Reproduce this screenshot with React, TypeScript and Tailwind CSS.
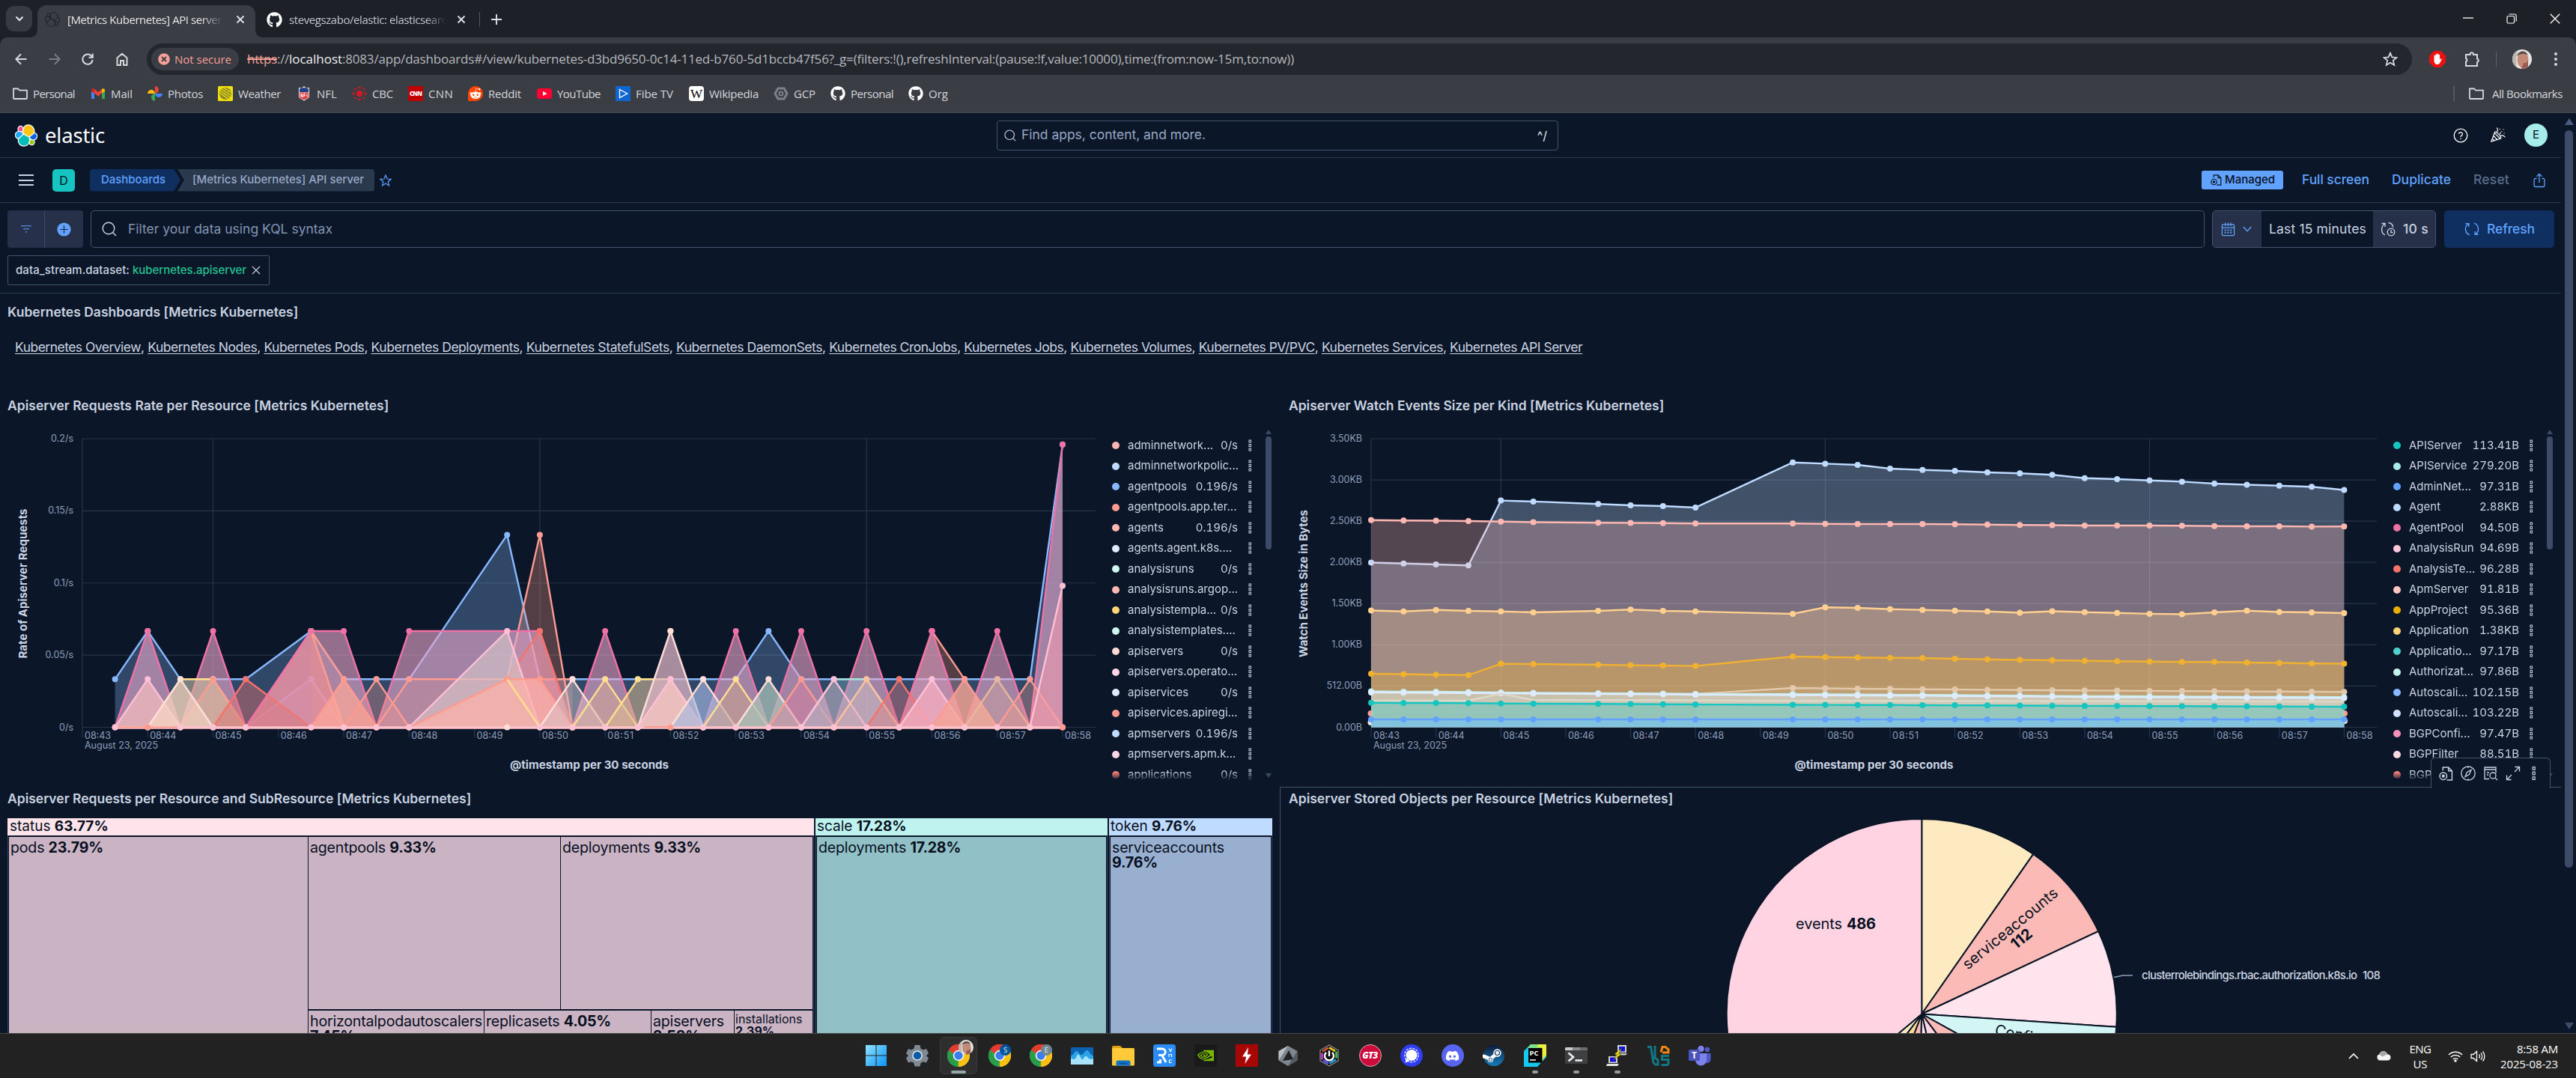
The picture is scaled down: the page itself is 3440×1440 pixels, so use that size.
import { useLayoutEffect, useRef, type ReactNode } from "react";
import { FaGithub, FaDiscord, FaRedditAlien } from "react-icons/fa";
import { SiNvidia, SiSteam } from "react-icons/si";

/* A single line of text whose tracking is tuned so that it spans `w` pixels. */
function Fit({ w, className = "", children }: { w: number; className?: string; children: string }) {
  const ref = useRef<HTMLSpanElement>(null);
  useLayoutEffect(() => {
    const el = ref.current;
    if (!el) return;
    el.style.letterSpacing = "0px";
    const natural = el.getBoundingClientRect().width;
    el.style.letterSpacing = `${(w - natural) / children.length}px`;
  }, [w, children]);
  return (
    <span ref={ref} className={`inline-block shrink-0 whitespace-nowrap ${className}`}>
      {children}
    </span>
  );
}

/* ---------- browser chrome ---------- */

function TabClose({ className = "" }: { className?: string }) {
  return (
    <svg viewBox="0 0 12 12" className={`h-3 w-3 shrink-0 ${className}`} stroke="#dfe1e6" strokeWidth="1.9" fill="none">
      <path d="M1.5 1.5l9 9M10.5 1.5l-9 9" />
    </svg>
  );
}

function ElasticMark({ mono = false, className = "" }: { mono?: boolean; className?: string }) {
  const f = (c: string) => (mono ? "#3b3d44" : c);
  const s = mono ? "#1b1d22" : "#ffffff";
  return (
    <svg viewBox="0 0 32 32" className={`shrink-0 ${className}`}>
      <g stroke={s} strokeWidth={mono ? 1.5 : 1.3}>
        <ellipse cx="8" cy="6.8" rx="3.8" ry="4.2" fill={f("#f04e98")} />
        <ellipse cx="24" cy="25.4" rx="3.8" ry="4.2" fill={f("#93c90e")} />
        <ellipse cx="6" cy="15.4" rx="5.6" ry="5.4" fill={f("#1ba9f5")} />
        <ellipse cx="26" cy="17" rx="5.6" ry="5.4" fill={f("#0b64dd")} />
        <path d="M12.5 13.5C10 9 11.5 1 19 .9c6 0 10 6.500 8 12.100L20 18.500z" fill={f("#fec514")} />
        <path d="M5 20.500l7.500-6.500 8 4.500c2 6-1 12.500-7.500 12.600C7 31 3.500 26 5 20.500z" fill={f("#02bcb7")} />
      </g>
    </svg>
  );
}

function TabStrip() {
  return (
    <div className="flex h-[50px] shrink-0 items-end bg-[#1d2027]">
      <div className="mb-2 ml-2 flex h-[34px] w-[35px] items-center justify-center rounded-[11px] bg-[#383a41]">
        <svg viewBox="0 0 12 8" className="h-[8px] w-[12px]" fill="none" stroke="#e3e5e8" strokeWidth="2">
          <path d="M1.500 1.500L6 6l4.500-4.500" />
        </svg>
      </div>
      <svg viewBox="0 0 10 10" className="ml-[-3px] h-[10px] w-[10px]">
        <path d="M10 0v10H0C6 10 10 6 10 0z" fill="#3b3d44" />
      </svg>
      <div className="flex h-[43px] w-[291px] items-center rounded-t-[12px] bg-[#3b3d44] pb-[5px] pl-[10px]">
        <ElasticMark mono className="h-5 w-5" />
        <div className="ml-[10px] w-[208px] overflow-hidden [mask-image:linear-gradient(90deg,#000_86%,transparent)]">
          <Fit w={206} className="text-[15px] text-[#e6e8ec]">[Metrics Kubernetes] API server</Fit>
        </div>
        <TabClose className="ml-[17px]" />
      </div>
      <svg viewBox="0 0 10 10" className="h-[10px] w-[10px]">
        <path d="M0 0v10h10C4 10 0 6 0 0z" fill="#3b3d44" />
      </svg>
      <div className="flex h-[43px] items-center pb-[5px]">
        <FaGithub className="ml-[5px] h-[21px] w-[21px] text-white" />
        <div className="ml-[9px] w-[209px] overflow-hidden [mask-image:linear-gradient(90deg,#000_88%,transparent)]">
          <Fit w={219} className="text-[15px] text-[#c3c7cd]">stevegszabo/elastic: elasticsearch</Fit>
        </div>
        <TabClose className="ml-[15px]" />
        <div className="ml-[18px] h-5 w-px bg-[#54565d]" />
        <svg viewBox="0 0 14 14" className="ml-[15px] h-[14px] w-[14px]" stroke="#dfe1e6" strokeWidth="1.900">
          <path d="M7 0v14M0 7h14" />
        </svg>
      </div>
      <div className="ml-auto flex h-[50px] items-center gap-[44px] pr-[21px]">
        <svg viewBox="0 0 14 14" className="h-[14px] w-[14px]" stroke="#fff" strokeWidth="1.300" fill="none">
          <path d="M0 6h14" />
        </svg>
        <svg viewBox="0 0 14 14" className="h-[14px] w-[14px]" stroke="#fff" strokeWidth="1.200" fill="none">
          <rect x="1" y="3.500" width="9.500" height="9.500" rx="1.500" />
          <path d="M3.500 1h7.500a2.200 2.200 0 0 1 2.200 2.200v7.300" />
        </svg>
        <svg viewBox="0 0 14 14" className="h-[14px] w-[14px]" stroke="#fff" strokeWidth="1.300" fill="none">
          <path d="M.8.8l12.400 12.400M13.200.8L.8 13.200" />
        </svg>
      </div>
    </div>
  );
}

function AvatarPhoto({ className = "" }: { className?: string }) {
  return (
    <svg viewBox="0 0 26 26" className={className}>
      <clipPath id="face">
        <circle cx="13" cy="13" r="13" />
      </clipPath>
      <g clipPath="url(#face)">
        <rect width="26" height="26" fill="#e4e6e6" />
        <path d="M0 0h9C4 6 5 14 6 26H0z" fill="#b9b6ab" />
        <ellipse cx="14" cy="14" rx="7.500" ry="10.500" fill="#c48a78" />
        <path d="M6 9C8 1 18 0 21 8c-4-3-9-3-15 1z" fill="#5a4a44" />
        <path d="M15 18c3 1 5-1 6-4v12h-9z" fill="#9b5d50" />
      </g>
    </svg>
  );
}

function Toolbar() {
  const st = { fill: "none", stroke: "#d5d8dd", strokeWidth: 2 };
  return (
    <div className="flex h-[50px] shrink-0 items-center bg-[#1d2027]">
      <div className="flex h-[50px] w-full items-center rounded-t-[10px] bg-[#3b3d44] pt-[8px]">
        <svg viewBox="0 0 16 16" className="ml-5 h-4 w-4" {...st}>
          <path d="M15.500 8H1.500M8 1.200L1.300 8 8 14.800" />
        </svg>
        <svg viewBox="0 0 16 16" className="ml-[29px] h-4 w-4 opacity-40" {...st}>
          <path d="M.5 8h14M8 1.200L14.700 8 8 14.800" />
        </svg>
        <svg viewBox="0 0 16 16" className="ml-[28px] h-4 w-4" {...st}>
          <path d="M14 5A6.700 6.700 0 1 0 14.700 9M14.800.5v5.200H9.500" />
        </svg>
        <svg viewBox="0 0 16 18" className="ml-[30px] h-[18px] w-4" {...st}>
          <path d="M1.500 7.200L8 1.800l6.500 5.400V17H10v-6H6v6H1.500z" />
        </svg>
        <div className="ml-[25px] flex h-[42px] w-[3025px] items-center rounded-full bg-[#24262d] pl-[6px]">
          <div className="flex h-[30px] w-[117px] items-center rounded-full bg-[#3b3d44] pl-[9px]">
            <svg viewBox="0 0 16 16" className="h-4 w-4">
              <circle cx="8" cy="8" r="7.800" fill="#f6a099" />
              <path d="M5 5l6 6M11 5l-6 6" stroke="#3b3d44" strokeWidth="1.800" />
            </svg>
            <Fit w={76} className="ml-[6px] text-[15px] font-medium text-[#f6a099]">Not secure</Fit>
          </div>
          <div className="ml-[11px] flex text-[17px]">
            <Fit w={40} className="text-[#f6a099] line-through decoration-2">https</Fit>
            <Fit w={16} className="text-[#b4b8bf]">://</Fit>
            <Fit w={71} className="text-[#eef0f2]">localhost</Fit>
            <Fit w={1271} className="text-[#b4b8bf]">
              :8083/app/dashboards#/view/kubernetes-d3bd9650-0c14-11ed-b760-5d1bccb47f56?_g=(filters:!(),refreshInterval:(pause:!f,value:10000),time:(from:now-15m,to:now))
            </Fit>
          </div>
          <svg viewBox="0 0 20 20" className="mr-[19px] ml-auto h-[20px] w-[20px]" fill="none" stroke="#d5d8dd" strokeWidth="1.800">
            <path d="M10 1.800l2.400 5.600 6 .5-4.600 4 1.400 6L10 14.700l-5.200 3.200 1.400-6-4.600-4 6-.5z" />
          </svg>
        </div>
        <svg viewBox="0 0 22 22" className="ml-[23px] h-[22px] w-[22px]">
          <path d="M6.500 0h9L22 6.500v9L15.500 22h-9L0 15.500v-9z" fill="#ee1111" />
          <path d="M6.500 12V6.500a1 1 0 0 1 1.900 0V5a1 1 0 0 1 1.900 0v-.7a1 1 0 0 1 1.900 0V5.500a1 1 0 0 1 1.900 0V12l1-1.500c.6-.8 1.700-.2 1.400.7C15 15 14 18 10.800 18c-3.300 0-4.300-2.500-4.300-6z" fill="#fff" />
        </svg>
        <svg viewBox="0 0 22 22" className="ml-[24px] h-[22px] w-[22px]" fill="none" stroke="#d5d8dd" strokeWidth="2">
          <path d="M3 5h5.500a2.300 2.300 0 1 1 4.500 0H18v5.500a2.300 2.300 0 0 1 0 4.500v5H3v-5.500a2.500 2.500 0 0 0 0-4.500z" />
        </svg>
        <div className="ml-[21px] h-5 w-px bg-[#5a6070]" />
        <AvatarPhoto className="ml-[21px] h-[26px] w-[26px]" />
        <svg viewBox="0 0 4 18" className="ml-[30px] h-[18px] w-1" fill="#d5d8dd">
          <circle cx="2" cy="2" r="2" />
          <circle cx="2" cy="9" r="2" />
          <circle cx="2" cy="16" r="2" />
        </svg>
      </div>
    </div>
  );
}

function FolderIcon() {
  return (
    <svg viewBox="0 0 20 20" className="h-5 w-5 shrink-0" fill="none" stroke="#d5d8dd" strokeWidth="1.800">
      <path d="M1 16V3.500h6l2 2.200h10V16a1 1 0 0 1-1 1H2a1 1 0 0 1-1-1z" />
    </svg>
  );
}

const bmIcon: Record<string, ReactNode> = {
  mail: (
    <svg viewBox="0 0 20 20" className="h-5 w-5">
      <path d="M1 5v12h4V9z" fill="#4285f4" />
      <path d="M19 5v12h-4V9z" fill="#34a853" />
      <path d="M1 5.500C1 3 3.500 2.500 5 4l5 4 5-4v5.500l-5 4-5-4z" fill="#ea4335" />
      <path d="M1 5.500C1 3 3.500 2.500 5 4v5.500L1 7z" fill="#c5221f" />
      <path d="M19 5.500C19 3 16.500 2.500 15 4v5.500L19 7z" fill="#fbbc04" />
    </svg>
  ),
  photos: (
    <svg viewBox="0 0 20 20" className="h-5 w-5">
      <path d="M10 0a5 5 0 0 1 0 10z" fill="#ea4335" />
      <path d="M20 10a5 5 0 0 1-10 0z" fill="#4285f4" />
      <path d="M10 20a5 5 0 0 1 0-10z" fill="#34a853" />
      <path d="M0 10a5 5 0 0 1 10 0z" fill="#fbbc04" />
    </svg>
  ),
  weather: (
    <svg viewBox="0 0 20 20" className="h-5 w-5">
      <rect width="20" height="20" rx="1.500" fill="#f3df0c" />
      <circle cx="10" cy="10" r="8" fill="#8a8a2c" />
      <path d="M3 6l13 9M2.500 9l11 8M5 4l12 8M8 2.500l9.500 6" stroke="#f3df0c" strokeWidth="1.100" />
    </svg>
  ),
  nfl: (
    <svg viewBox="0 0 20 20" className="h-5 w-5">
      <path d="M3 2l4 .8L10 0l3 2.800L17 2v12c0 3-5 3-7 6-2-3-7-3-7-6z" fill="#e9edf5" />
      <path d="M4 3.500l6-1.500 6 1.500V8H4z" fill="#1f3f86" />
      <path d="M4 8.500h12v6c0 2-4 2-6 4-2-2-6-2-6-4z" fill="#d33" />
      <path d="M6 10v5M6 10l2 5V10M10 15v-5h2M10 12.500h2M14 10v5" stroke="#fff" strokeWidth="1" fill="none" />
    </svg>
  ),
  cbc: (
    <svg viewBox="0 0 20 20" className="h-5 w-5" fill="#d21a26">
      <circle cx="10" cy="10" r="4.200" />
      <path d="M5.800 4.500a6 6 0 0 1 8.400 0L10 0zM5.800 15.500a6 6 0 0 0 8.400 0L10 20zM4.500 5.800a6 6 0 0 0 0 8.400L0 10zM15.500 5.800a6 6 0 0 1 0 8.400L20 10z" />
      <path d="M3 3h3L3 6zM17 3h-3l3 3zM3 17h3l-3-3zM17 17h-3l3-3z" />
    </svg>
  ),
  cnn: (
    <span className="flex h-5 w-5 items-center justify-center bg-[#c00000] text-[8px] font-black tracking-[-0.8px] text-white">CNN</span>
  ),
  reddit: (
    <span className="flex h-5 w-5 items-center justify-center rounded-full rounded-bl-sm bg-[#ff4500]">
      <FaRedditAlien className="h-4 w-4 text-white" />
    </span>
  ),
  youtube: (
    <svg viewBox="0 0 20 20" className="h-5 w-5">
      <rect x="0" y="3" width="20" height="14" rx="3.500" fill="#ff0033" />
      <path d="M8 7l5.500 3L8 13z" fill="#fff" />
    </svg>
  ),
  fibe: (
    <svg viewBox="0 0 20 20" className="h-5 w-5">
      <rect width="20" height="20" fill="#0f66d0" />
      <path d="M5.500 4.500L15.500 10l-10 5.500z" fill="none" stroke="#fff" strokeWidth="1.400" />
    </svg>
  ),
  wiki: (
    <span className="flex h-5 w-5 items-center justify-center rounded-[4px] bg-white font-['Liberation_Serif',serif] text-[17px] leading-none text-black">W</span>
  ),
  gcp: (
    <svg viewBox="0 0 20 20" className="h-5 w-5" fill="none" stroke="#7d8086" strokeWidth="3">
      <path d="M6 3h8l4 7-4 7H6l-4-7z" />
      <circle cx="10" cy="10" r="2.500" strokeWidth="2" />
    </svg>
  ),
  github: <FaGithub className="h-5 w-5 text-white" />,
  folder: <FolderIcon />,
};

const bookmarks: [string, string, number, number][] = [
  ["folder", "Personal", 56, 21],
  ["mail", "Mail", 29, 20],
  ["photos", "Photos", 47, 20],
  ["weather", "Weather", 57, 21],
  ["nfl", "NFL", 27, 20],
  ["cbc", "CBC", 28, 20],
  ["cnn", "CNN", 33, 20],
  ["reddit", "Reddit", 44, 21],
  ["youtube", "YouTube", 58, 20],
  ["fibe", "Fibe TV", 50, 21],
  ["wiki", "Wikipedia", 66, 20],
  ["gcp", "GCP", 29, 20],
  ["github", "Personal", 57, 20],
  ["github", "Org", 26, 0],
];

function BookmarkBar() {
  return (
    <div className="flex h-[51px] shrink-0 items-center border-b border-[#4a4c50] bg-[#3b3d44] pl-[17px] text-[15px] text-[#d3d6db]">
      {bookmarks.map(([icon, label, w, gap], i) => (
        <div key={i} className="flex items-center" style={{ marginRight: gap }}>
          {bmIcon[icon]}
          <Fit w={w} className="ml-[7px]">{label}</Fit>
        </div>
      ))}
      <div className="ml-auto h-5 w-[2px] bg-[#565861]" />
      <div className="mr-[18px] ml-[19px] flex items-center">
        <FolderIcon />
        <Fit w={94} className="ml-[11px]">All Bookmarks</Fit>
      </div>
    </div>
  );
}

/* ---------- Kibana header ---------- */

function SearchGlass({ className = "" }: { className?: string }) {
  return (
    <svg viewBox="0 0 20 20" className={`shrink-0 ${className}`} fill="none" stroke="#cad3e2" strokeWidth="1.400">
      <circle cx="9" cy="9" r="7.800" />
      <path d="M14.500 14.500l4.500 4.500" />
    </svg>
  );
}

function KibanaHeader() {
  return (
    <div className="flex h-[60px] shrink-0 items-center border-b border-[#2b394f]">
      <ElasticMark className="ml-5 h-[30px] w-[30px]" />
      <Fit w={80} className="mt-px ml-[10px] font-['Noto_Sans',sans-serif] text-[27.500px] leading-none text-white">elastic</Fit>
      <div className="ml-[1191px] flex h-10 w-[750px] items-center rounded-[4px] border border-[#43536f] pl-[9px]">
        <SearchGlass className="h-4 w-4" />
        <Fit w={246} className="ml-[7px] text-[17.5px] text-[#98a8c3]">Find apps, content, and more.</Fit>
        <span className="mr-[14px] ml-auto text-[16px] text-[#e3e8f2]">^/</span>
      </div>
      <svg viewBox="0 0 20 20" className="ml-[1195px] h-[20px] w-[20px]" fill="none" stroke="#fff" strokeWidth="1.300">
        <circle cx="10" cy="10" r="8.800" />
        <path d="M7.600 8a2.400 2.400 0 1 1 3.600 2.100c-.8.500-1.200.9-1.200 1.900M10 13.600v1.500" />
      </svg>
      <svg viewBox="0 0 22 22" className="ml-[29px] h-[21px] w-[21px]" fill="none" stroke="#fff" strokeWidth="1.300">
        <path d="M7 6.500L2 20l13.500-4.500C16 13 9.500 6 7 6.500zM6.500 8l8 8M5 12l5.500 5.500M3.500 16l3 3M10 6c2-1 1-3 0-5M14 9l1-1.500M15 12c2.500-1.500 4.500 0 6 1.500M16.500 6h.1M14 2.500h.1M19 3h.1M20 8.500h.1" strokeLinecap="round" />
      </svg>
      <div className="ml-[25px] flex h-[31px] w-[31px] items-center justify-center rounded-full bg-[#a6edea] text-[15px] text-[#07101f]">E</div>
    </div>
  );
}

function Breadcrumbs() {
  return (
    <div className="flex h-[60px] shrink-0 items-center border-b border-[#2b394f] text-[15px]">
      <div className="ml-[25px] flex flex-col gap-[4.500px]">
        <div className="h-[2px] w-5 bg-[#cad3e2]" />
        <div className="h-[2px] w-5 bg-[#cad3e2]" />
        <div className="h-[2px] w-5 bg-[#cad3e2]" />
      </div>
      <div className="ml-[25px] flex h-[30px] w-[30px] items-center justify-center rounded-[5px] bg-[#16c5c0] text-[16px] text-[#07101f]">D</div>
      <div className="ml-5 flex h-[30px] w-[121px] items-center rounded-l-[4px] bg-[#0f2f60] pl-[15px] [clip-path:polygon(0_0,112px_0,100%_50%,112px_100%,0_100%)]">
        <Fit w={86} className="font-medium text-[#61a2ff]">Dashboards</Fit>
      </div>
      <div className="ml-[-4px] flex h-[30px] w-[263px] items-center rounded-r-[4px] bg-[#2b394f] pl-[20px] [clip-path:polygon(0_0,100%_0,100%_100%,0_100%,9px_50%)]">
        <Fit w={229} className="font-medium text-[#98a8c3]">[Metrics Kubernetes] API server</Fit>
      </div>
      <svg viewBox="0 0 16 16" className="ml-[7px] h-4 w-4" fill="none" stroke="#61a2ff" strokeWidth="1.200">
        <path d="M8 1l2 5 5.200.3-4 3.400 1.300 5.200L8 12l-4.500 2.900 1.300-5.200-4-3.400L6 6z" />
      </svg>
      <div className="ml-auto flex h-[25px] w-[109px] items-center rounded-[3px] bg-[#61a2ff] pl-[12px]">
        <DocClockIcon className="h-[15px] w-[15px] text-[#07101f]" />
        <Fit w={67} className="ml-[4px] font-medium text-[#07101f]">Managed</Fit>
      </div>
      <Fit w={90} className="ml-[25px] text-[17.500px] font-medium text-[#61a2ff]">Full screen</Fit>
      <Fit w={79} className="ml-[30px] text-[17.500px] font-medium text-[#61a2ff]">Duplicate</Fit>
      <Fit w={48} className="ml-[30px] text-[17.500px] font-medium text-[#5a6d8c]">Reset</Fit>
      <svg viewBox="0 0 20 20" className="mr-[19px] ml-[30px] h-5 w-5" fill="none" stroke="#61a2ff" strokeWidth="1.300">
        <path d="M6.500 7.500H4.500c-.8 0-1.400.6-1.400 1.400v8.200c0 .8.600 1.400 1.400 1.400h11c.8 0 1.400-.6 1.400-1.400V8.900c0-.8-.6-1.400-1.400-1.400h-2M10 13V1.500M6.500 4.800L10 1.300l3.500 3.500" />
      </svg>
    </div>
  );
}

function DocClockIcon({ className = "" }: { className?: string }) {
  return (
    <svg viewBox="0 0 18 18" className={`shrink-0 ${className}`} fill="none" stroke="currentColor" strokeWidth="1.400">
      <path d="M5 5V1h7l4.500 4.500V17H10M12 1v4.500h4.500" />
      <circle cx="5.500" cy="12" r="4.500" />
      <circle cx="5.500" cy="12" r="1.300" fill="currentColor" />
    </svg>
  );
}

function QueryBar() {
  return (
    <div className="flex h-[121px] shrink-0 flex-col border-b border-[#2b394f] pt-[10px] pl-[10px]">
      <div className="flex h-[50px] items-center">
        <div className="flex h-[50px] w-[101px] overflow-hidden rounded-[4px] bg-[#263149]">
          <div className="flex w-[50px] items-center justify-center border-r border-[#3a4c6b]">
            <svg viewBox="0 0 14 10" className="h-[10px] w-[14px]" fill="#4a7cc8">
              <path d="M0 0h14v1.500H0zM3 4h8v1.500H3zM5.800 8h2.400v1.600H5.800z" />
            </svg>
          </div>
          <div className="flex flex-1 items-center justify-center">
            <svg viewBox="0 0 20 20" className="h-[19px] w-[19px]">
              <circle cx="10" cy="10" r="9.600" fill="#61a2ff" />
              <path d="M10 4.500v11M4.500 10h11" stroke="#1d2a44" strokeWidth="1.300" />
            </svg>
          </div>
        </div>
        <div className="ml-[10px] flex h-[50px] w-[2823px] items-center rounded-[5px] border border-[#43536f] pl-[14px]">
          <SearchGlass className="h-[20px] w-[20px]" />
          <Fit w={273} className="ml-[15px] text-[17.500px] text-[#8395b3]">Filter your data using KQL syntax</Fit>
        </div>
        <div className="ml-[10px] flex h-[50px] w-[299px] overflow-hidden rounded-[5px] border border-[#43536f]">
          <div className="flex w-[65px] items-center bg-[#263149] pl-[11px]">
            <svg viewBox="0 0 20 20" className="h-[19px] w-[19px]" fill="none" stroke="#61a2ff" strokeWidth="1.300">
              <rect x="1.500" y="3" width="17" height="15.500" rx="1.500" />
              <path d="M1.500 7.500h17M6 .5V5M14 .5V5M10 .5V5" />
              <path d="M5 11h2M9 11h2M13 11h2M5 14.500h2M9 14.500h2M13 14.500h2" strokeWidth="2" />
            </svg>
            <svg viewBox="0 0 12 8" className="ml-[10px] h-[8px] w-[12px]" fill="none" stroke="#61a2ff" strokeWidth="1.300">
              <path d="M.8 1L6 6.800 11.200 1" />
            </svg>
          </div>
          <div className="flex w-[149px] items-center pl-[10px]">
            <Fit w={130} className="text-[17.500px] text-[#cad3e2]">Last 15 minutes</Fit>
          </div>
          <div className="flex flex-1 items-center bg-[#263149] pl-[10px]">
            <svg viewBox="0 0 20 20" className="h-5 w-5" fill="none" stroke="#cad3e2" strokeWidth="1.300">
              <path d="M1.500 2.500h4.500v4.500M6 18C.5 15.500 0 7 5.500 3M10.500 1.500c4 .5 6 3.500 6.200 6.200" />
              <circle cx="14" cy="14" r="4.800" />
              <path d="M14 11v3.500h2.500" />
            </svg>
            <Fit w={34} className="ml-[10px] text-[17.500px] font-medium text-[#cad3e2]">10 s</Fit>
          </div>
        </div>
        <div className="ml-[11px] flex h-[50px] w-[147px] items-center rounded-[5px] bg-[#0f2f60] pl-[27px]">
          <svg viewBox="0 0 20 20" className="h-[20px] w-[20px]" fill="none" stroke="#61a2ff" strokeWidth="1.400">
            <path d="M7 17.800A8.200 8.200 0 0 1 5.500 3M1.500 2.700h4.300V7M13 2.200A8.200 8.200 0 0 1 14.500 17M18.500 17.300h-4.300V13" />
          </svg>
          <Fit w={64} className="ml-[10px] text-[17.500px] font-medium text-[#61a2ff]">Refresh</Fit>
        </div>
      </div>
      <div className="mt-[10px] flex h-10 w-[350px] items-center rounded-[2px] border border-[#43536f] pl-[10px] text-[15px] font-medium">
        <Fit w={152} className="text-[#cad3e2]">data_stream.dataset:</Fit>
        <Fit w={152} className="ml-[4px] text-[#24c292]">kubernetes.apiserver</Fit>
        <svg viewBox="0 0 12 12" className="ml-[7px] h-3 w-3" stroke="#cad3e2" strokeWidth="1.100">
          <path d="M1 1l10 10M11 1L1 11" />
        </svg>
      </div>
    </div>
  );
}

/* ---------- panels ---------- */

const links: [string, number][] = [
  ["Kubernetes Overview", 168],
  ["Kubernetes Nodes", 146],
  ["Kubernetes Pods", 134],
  ["Kubernetes Deployments", 198],
  ["Kubernetes StatefulSets", 191],
  ["Kubernetes DaemonSets", 195],
  ["Kubernetes CronJobs", 171],
  ["Kubernetes Jobs", 133],
  ["Kubernetes Volumes", 162],
  ["Kubernetes PV/PVC", 155],
  ["Kubernetes Services", 162],
  ["Kubernetes API Server", 177],
];

function PanelTitle({ w, children }: { w: number; children: string }) {
  return <Fit w={w} className="text-[17.500px] font-semibold text-[#cad3e2]">{children}</Fit>;
}

type Series = {
  pts: [number, number][];
  line: string;
  fill?: string;
  alpha?: number;
  dots?: boolean;
};

function AreaSeries({ s, x, y, base, r = 4 }: { s: Series; x: (i: number) => number; y: (v: number) => number; base: number; r?: number }) {
  const d = s.pts.map(([i, v], k) => `${k ? "L" : "M"}${x(i).toFixed(1)} ${y(v).toFixed(1)}`).join("");
  const first = x(s.pts[0][0]);
  const last = x(s.pts[s.pts.length - 1][0]);
  return (
    <g>
      {s.alpha !== 0 && <path d={`${d}L${last} ${base}L${first} ${base}z`} fill={s.fill ?? s.line} fillOpacity={s.alpha ?? 0.3} />}
      <path d={d} fill="none" stroke={s.line} strokeWidth="2.400" />
      {s.dots !== false && s.pts.map(([i, v]) => <circle key={i} cx={x(i)} cy={y(v)} r={r} fill={s.line} />)}
    </g>
  );
}

const TICKS = Array.from({ length: 16 }, (_, k) => `08:${43 + k}`);

function ChartFrame({
  x0, x1, step, labels, rows, labelRight, title, titleX, titleW, dateX, xTitleX, children,
}: {
  x0: number; x1: number; step: number; labels: string[]; rows: number; labelRight: number;
  title: string; titleX: number; titleW: number; dateX: number; xTitleX: number; children: ReactNode;
}) {
  const top = 586;
  const bottom = 971.5;
  return (
    <>
      <g stroke="#2b394f" strokeWidth="1.200" strokeOpacity="0.850">
        {labels.map((_, k) => {
          const yy = top + ((bottom - top) * k) / rows;
          return <path key={k} d={`M${x0} ${yy}H${x1}`} />;
        })}
        {[0, 2, 7, 12].map((m) => (
          <path key={m} d={`M${x0 + m * step} ${top}V${bottom}`} />
        ))}
        {TICKS.map((_, k) => (
          <path key={k} d={`M${x0 + k * step} ${bottom}v14`} />
        ))}
      </g>
      {children}
      <g fill="#8e9fbc" fontSize="12.500">
        {labels.map((l, k) => (
          <text key={l} x={labelRight} y={top + ((bottom - top) * k) / rows + 4} textAnchor="end">{l}</text>
        ))}
        {TICKS.map((t, k) => (
          <text key={t} x={x0 + k * step + 3} y={986.500} textLength="35" lengthAdjust="spacing">{t}</text>
        ))}
        <text x={dateX} y={1000} textLength="98">August 23, 2025</text>
      </g>
      <g fill="#cad3e2" fontSize="15" fontWeight="700">
        <text x={xTitleX} y="1026.500" textAnchor="middle" textLength="212">@timestamp per 30 seconds</text>
        <text transform={`translate(${titleX} 779.500) rotate(-90)`} textAnchor="middle" textLength={titleW}>{title}</text>
      </g>
    </>
  );
}

const P = (s: string): [number, number][] =>
  s.split(" ").map((p) => {
    const [i, v] = p.split(":");
    return [Number(i), Number(v)];
  });

const BLUE = "#88b8ff";
const SALMON = "#ff9a90";
const PINK = "#ee72a6";
const LPINK = "#ffbfd4";
const CREAM = "#ffded8";
const YELLOW = "#ffde8e";
const RED = "#f6726a";

const rateSeries: Series[] = [
  { line: BLUE, pts: P("1:1 2:2 3:1 4:1 5:1 7:2 8:1 9:1 10:1 13:4 14:1 15:1 16:1 17:1 18:1 19:1 20:1 21:2 22:1 23:1 24:1 25:1 26:1 27:1 28:1 29:1 30:5.880"), dots: true },
  { line: SALMON, pts: P("13:1 14:4 15:0") },
  { line: SALMON, pts: P("25:0 26:2 27:1 28:0") },
  { line: PINK, fill: "#e9a7cc", alpha: 0.62, pts: P("1:0 2:2 3:0 4:2 5:0 7:2 8:2 9:0 10:2 13:2 14:2 15:0 16:2 17:0") },
  { line: PINK, fill: "#e9a7cc", alpha: 0.62, pts: P("19:0 20:2 21:0 22:2 23:0 24:2 25:0 26:2 27:0 28:2 29:0 30:5.880") },
  { line: "#b9a0e0", pts: P("5:0 7:1 8:0") },
  { line: SALMON, fill: "#ff8f8f", alpha: 0.55, pts: P("5:0 7:2 8:0") },
  { line: SALMON, alpha: 0.1, pts: P("7:2 8:1 9:0") },
  { line: YELLOW, fill: "#d8c890", alpha: 0.45, pts: P("2:0 3:1 4:1 5:0") },
  { line: SALMON, fill: "#e9b4a0", alpha: 0.4, pts: P("3:0 4:1 5:0") },
  { line: RED, fill: "#e07070", alpha: 0.45, pts: P("4:0 5:1 7:0") },
  { line: SALMON, fill: "#ffaa9a", alpha: 0.7, pts: P("7:0 8:1 9:0") },
  { line: SALMON, alpha: 0.3, pts: P("8:0 9:1 10:0") },
  { line: PINK, dots: false, fill: "#c08ab4", alpha: 0.15, pts: P("5:0 7:2") },
  { line: SALMON, alpha: 0.2, pts: P("9:0 10:1 13:1 14:1 15:1") },
  { line: RED, fill: "#f48a8f", alpha: 0.3, pts: P("13:1 14:2 15:0") },
  { line: LPINK, fill: "#d6c4c8", alpha: 0.65, pts: P("10:0 13:2 14:0") },
  { line: SALMON, fill: "#ffb0aa", alpha: 0.7, pts: P("10:0 13:1 14:1 15:0") },
  { line: YELLOW, fill: "#e8b0a0", alpha: 0.2, pts: P("13:1 14:0"), dots: false },
  { line: LPINK, fill: "#ffc4c0", alpha: 0.65, pts: P("1:0 2:1 3:0") },
  { line: CREAM, fill: "#f4d4c4", alpha: 0.65, pts: P("2:0 3:1 4:0") },
  { line: CREAM, fill: "#d8c8cc", alpha: 0.45, pts: P("14:0 15:1 16:0") },
  { line: YELLOW, fill: "#ddb09a", alpha: 0.5, pts: P("15:0 16:1 17:0") },
  { line: YELLOW, fill: "#d8b890", alpha: 0.55, pts: P("16:0 17:1 18:1 19:0") },
  { line: CREAM, fill: "#dcb4c4", alpha: 0.75, pts: P("17:0 18:2 19:0") },
  { line: LPINK, fill: "#f8c8c0", alpha: 0.7, pts: P("17:0 18:1 19:0") },
  { line: CREAM, fill: "#a4b8e0", alpha: 0.65, pts: P("18:0 19:1 20:0") },
  { line: YELLOW, fill: "#c8a090", alpha: 0.6, pts: P("19:0 20:1 21:0") },
  { line: CREAM, fill: "#a8c0b8", alpha: 0.75, pts: P("20:0 21:1 22:0") },
  { line: SALMON, fill: "#e080a0", alpha: 0.45, pts: P("21:0 22:1 23:0") },
  { line: "#a8e0dc", fill: "#8fc8d0", alpha: 0.3, dots: false, pts: P("22:0 23:1 24:1 25:0") },
  { line: LPINK, fill: "#c0a8bc", alpha: 0.5, pts: P("22:0 23:1 24:0") },
  { line: "#ffc29a", fill: "#d8b0b8", alpha: 0.5, pts: P("23:0 24:1 25:0") },
  { line: RED, fill: "#e07880", alpha: 0.4, pts: P("24:0 25:1 26:0") },
  { line: LPINK, fill: "#ffb4c4", alpha: 0.65, pts: P("25:0 26:1 27:0") },
  { line: SALMON, fill: "#f4a494", alpha: 0.75, pts: P("26:0 27:1 28:0") },
  { line: "#e8b89a", alpha: 0.3, pts: P("27:0 28:1 29:0") },
  { line: SALMON, alpha: 0.3, pts: P("28:0 29:1 30:0") },
  { line: LPINK, fill: "#f49cb0", alpha: 0.6, pts: P("29:0 30:2.940") },
];

function RateChart() {
  const x = (i: number) => 110 + 43.633 * i;
  const y = (v: number) => 971.5 - v * 64.25;
  const idx = [1, 2, 3, 4, 5, 7, 8, 9, 10, 13, 14, 15, 16, 17, 18, 19, 20, 21, 22, 23, 24, 25, 26, 27, 28, 29, 30];
  return (
    <svg viewBox="0 567 1480 484" className="h-[484px] w-[1480px] shrink-0">
      <ChartFrame x0={110} x1={1463} step={87.267} rows={4} labels={["0.2/s", "0.15/s", "0.1/s", "0.05/s", "0/s"]} labelRight={98}
        title="Rate of Apiserver Requests" titleX={35.5} titleW={200} dateX={113} xTitleX={787}>
        {rateSeries.map((s, k) => (
          <AreaSeries key={k} s={s} x={x} y={y} base={971.5} />
        ))}
        {[[2, 2], [7, 2], [14, 2], [18, 2], [26, 2]].map(([i, v]) => (
          <circle key={i} cx={x(i)} cy={y(v)} r="4" fill={i === 14 ? RED : i === 18 ? CREAM : PINK} />
        ))}
        <path d={`M${x(1)} 972H${x(30)}`} stroke="#ffc2ca" strokeWidth="3.500" />
        <path d={`M${x(1)} 971.500H${x(2.900)}M${x(17.200)} 971H${x(18)}`} stroke={SALMON} strokeWidth="2" />
        {idx.map((i) => (
          <circle key={i} cx={x(i)} cy="971.500" r="4" fill={i === 2 || i === 18 || i === 30 ? SALMON : i === 13 ? CREAM : "#ffc2d4"} />
        ))}
      </ChartFrame>
    </svg>
  );
}

const sizeSeries: Series[] = [
  { line: "#bfdbff", pts: P("0:751.5 1:752.8 2:754 3:755.3 4:668.6 5:669.9 7:673.2 8:675 9:676 10:678 13:617.7 14:619.4 15:621 16:626 17:627.8 18:629 19:631 20:632.300 21:634.300 22:638.7 23:640 24:641.7 25:643.4 26:646 27:647.5 28:648.8 29:650.200 30:654.5") },
  { line: "#ffb7b2", pts: P("0:694.7 1:695.2 2:695.5 3:696 4:696.8 5:697.5 7:698.2 8:698.5 9:698.7 10:699.3 13:699.3 14:699.8 15:700 16:700 17:700 18:700.2 19:700.7 20:701.300 21:701.5 22:702 23:702 24:702 25:702.300 26:702.700 27:703 28:703 29:703.400 30:703.2") },
  { line: "#ffcf8f", pts: P("0:815.5 1:816.8 2:814.7 3:816 4:816.8 5:818 7:816 8:814.2 9:816 10:816.8 13:820 14:811.3 15:812 16:813.8 17:814.7 18:815.8 19:816.8 20:818.5 21:816.5 22:817.8 23:818.8 24:819.9 25:820.5 26:818 27:815.8 28:817.5 29:818 30:819") },
  { line: "#f0b030", pts: P("0:900 1:900.5 2:901.3 3:901.8 4:886.6 5:887 7:888 8:888.6 9:889 10:889.6 13:877 14:877.8 15:878.2 16:878.7 17:879 18:880 19:880.7 20:881.5 21:882 22:882.7 23:883.2 24:883.8 25:884.2 26:884.300 27:885 28:885.5 29:886.2 30:886.5") },
  { line: "#e3c9ac", alpha: 0.2, pts: P("10:927 13:919 14:919.5 15:920 16:920.3 17:920.7 18:921 19:921.4 20:921.7 21:922 22:922.3 23:922.6 24:922.9 25:923.1 26:923.3 27:923.6 28:923.8 29:924 30:924.300") },
  { line: "#bff0ec", fill: "#d8e9e8", alpha: 0.2, pts: P("0:923.500 1:924 2:924 3:924.500 4:925 5:925.500 7:926 8:926.200 9:926.500 10:927 13:927.300 14:927.500 15:927.800 16:928 17:928.200 18:928.500 19:929 20:929.300 21:929.600 22:930 23:930 24:930.300 25:930.500 26:930.700 27:930.900 28:931 29:931 30:931.300") },
  { line: "#dfebff", fill: "#d8e9ec", alpha: 0.4, pts: P("0:925 1:925.300 2:925.500 3:925.700 4:926 5:926.500 7:927 8:927.200 9:927.500 10:928 13:928.500 14:928.700 15:929 16:929.200 17:929.400 18:929.700 19:930 20:930.300 21:930.600 22:931 23:931.200 24:931.400 25:931.600 26:931.800 27:932 28:932.200 29:932.400 30:932.500") },
  { line: "#dcd9cb", alpha: 0.25, dots: false, pts: P("0:936 3:936 4:926.500 5:935 10:935.500 13:936 30:937") },
  { line: "#16c5c0", fill: "#5ac6be", alpha: 0.5, pts: P("0:938.8 1:939 2:939 3:939.3 4:939.7 5:940 7:940.3 8:940.500 9:940.7 10:941 13:941.500 14:941.600 15:941.700 16:941.800 17:942 18:942.100 19:942.300 20:942.500 21:942.700 22:942.900 23:943 24:943.200 25:943.300 26:943.500 27:943.600 28:943.800 29:943.900 30:944") },
  { line: "#61a2ff", fill: "#75c0ff", alpha: 0.55, pts: P("0:961 1:961 2:961 3:961 4:961 5:961 7:961 8:961 9:961 10:961 13:961 14:961 15:961 16:961 17:961 18:961 19:961 20:961 21:961 22:961 23:961 24:961 25:961 26:961 27:961 28:961 29:961 30:961") },
];

function SizeChart() {
  const x = (i: number) => 1831 + 43.313 * i;
  return (
    <svg viewBox="1709 567 1482 484" className="h-[484px] w-[1482px] shrink-0">
      <ChartFrame x0={1831} x1={3174} step={86.627} rows={7}
        labels={["3.50KB", "3.00KB", "2.50KB", "2.00KB", "1.50KB", "1.00KB", "512.00B", "0.00B"]} labelRight={1819}
        title="Watch Events Size in Bytes" titleX={1745.5} titleW={197} dateX={1834} xTitleX={2502.5}>
        <circle cx="1830.500" cy="953" r="4" fill={SALMON} />
        <circle cx="1830.500" cy="965" r="4" fill={CREAM} />
        <circle cx="3131" cy="953" r="4" fill={SALMON} />
        <circle cx="3131" cy="963" r="4" fill={CREAM} />
        {sizeSeries.map((s, k) => (
          <AreaSeries key={k} s={s} x={x} y={(v) => v} base={971.5} />
        ))}
      </ChartFrame>
    </svg>
  );
}

function MenuDots({ className = "" }: { className?: string }) {
  return (
    <svg viewBox="0 0 5 16" className={`shrink-0 ${className}`} fill="none" stroke="#cad3e2" strokeWidth="1">
      <rect x="1" y="1" width="2.500" height="3" />
      <rect x="1" y="6.500" width="2.500" height="3" />
      <rect x="1" y="12" width="2.500" height="3" />
    </svg>
  );
}

const legendA: [string, string, string][] = [
  ["#ffb7b2", "adminnetwork...", "0/s"],
  ["#bfdbff", "adminnetworkpolic...", ""],
  ["#88b8ff", "agentpools", "0.196/s"],
  ["#ff9a90", "agentpools.app.ter...", ""],
  ["#ffb7b2", "agents", "0.196/s"],
  ["#dfebff", "agents.agent.k8s....", ""],
  ["#d0f6f2", "analysisruns", "0/s"],
  ["#ffb7b2", "analysisruns.argop...", ""],
  ["#ffd576", "analysistempla...", "0/s"],
  ["#d0f6f2", "analysistemplates....", ""],
  ["#ffdbd6", "apiservers", "0/s"],
  ["#ffd6e4", "apiservers.operato...", ""],
  ["#dfebff", "apiservices", "0/s"],
  ["#ff9a90", "apiservices.apiregi...", ""],
  ["#bfdbff", "apmservers", "0.196/s"],
  ["#ffd6e4", "apmservers.apm.k...", ""],
  ["#f6827a", "applications", "0/s"],
];

const legendB: [string, string, string][] = [
  ["#16c5c0", "APIServer", "113.41B"],
  ["#a6edea", "APIService", "279.20B"],
  ["#61a2ff", "AdminNet...", "97.31B"],
  ["#bfdbff", "Agent", "2.88KB"],
  ["#ee72a6", "AgentPool", "94.50B"],
  ["#ffc7db", "AnalysisRun", "94.69B"],
  ["#f6726a", "AnalysisTe...", "96.28B"],
  ["#ffc9c2", "ApmServer", "91.81B"],
  ["#eaae01", "AppProject", "95.36B"],
  ["#fcd279", "Application", "1.38KB"],
  ["#4fd0cc", "Applicatio...", "97.17B"],
  ["#c0f3ef", "Authorizat...", "97.86B"],
  ["#88b8ff", "Autoscali...", "102.15B"],
  ["#d0e2ff", "Autoscali...", "103.22B"],
  ["#f490bb", "BGPConfi...", "97.47B"],
  ["#ffd6e4", "BGPFilter", "88.51B"],
  ["#f6827a", "BGP", ""],
];

function Legend({ items, pad }: { items: [string, string, string][]; pad: string }) {
  return (
    <div className={`flex h-[476px] overflow-hidden pt-[7px] ${pad}`}>
      <div className="h-[469px] overflow-hidden pt-[7px] [mask-image:linear-gradient(180deg,#000_97.5%,transparent)]">
        {items.map(([c, n, v], k) => (
          <div key={k} className="flex h-[27.500px] items-center text-[15px] text-[#cad3e2]">
            <svg viewBox="0 0 10 10" className="mt-px h-[10px] w-[10px] shrink-0">
              <circle cx="5" cy="5" r="5" fill={c} />
            </svg>
            <div className="ml-[11px] flex w-[147px] justify-between whitespace-nowrap">
              <span>{n}</span>
              <span className="tabular-nums">{v}</span>
            </div>
            <MenuDots className="ml-[14px] h-4 w-[5px]" />
          </div>
        ))}
      </div>
      <div className="ml-[18px] flex w-2 flex-col items-center">
        <svg viewBox="0 0 8 6" className="h-[6px] w-2 shrink-0">
          <path d="M0 6L4 0l4 6z" fill="#3a4964" />
        </svg>
        <div className="mt-[3px] h-[151px] w-2 rounded-full bg-[#3d4b68]" />
        <svg viewBox="0 0 8 6" className="mt-auto mb-[4px] h-[6px] w-2 shrink-0">
          <path d="M0 0l4 6 4-6z" fill="#3a4964" />
        </svg>
      </div>
    </div>
  );
}

function Cell({ name, value, className = "" }: { name: string; value: string; className?: string }) {
  return (
    <div className={`overflow-hidden leading-[20px] text-[#07101f] ${className}`}>
      {name} <b className="font-bold">{value}</b>
    </div>
  );
}

function Treemap() {
  const a = "bg-[#cab3c3] pl-[2px] pt-[4px] text-[19.600px] tracking-[-0.200px]";
  return (
    <div className="mt-[9px] ml-[10px] flex h-[288px] gap-[2px] overflow-hidden">
      <div className="flex w-[1077px] flex-col">
        <Cell name="status" value="63.77%" className="h-[23px] shrink-0 bg-[#ffe4eb] pt-[1px] pl-[3px] text-[19px]" />
        <div className="flex h-[265px] gap-[1px] border-x border-[#35455f] bg-[#0a1526] px-[1px] pt-[2px]">
          <Cell name="pods" value="23.79%" className={`w-[399px] ${a}`} />
          <div className="flex flex-1 flex-col gap-[2px]">
            <div className="flex h-[230px] shrink-0 gap-[1px]">
              <Cell name="agentpools" value="9.33%" className={`w-[336px] ${a}`} />
              <Cell name="deployments" value="9.33%" className={`flex-1 ${a}`} />
            </div>
            <div className="flex h-[31px] gap-[1px]">
              <Cell name="horizontalpodautoscalers" value="7.45%" className={`w-[234px] ${a}`} />
              <Cell name="replicasets" value="4.05%" className={`w-[222px] ${a}`} />
              <Cell name="apiservers" value="2.53%" className={`w-[110px] ${a}`} />
              <Cell name="installations" value="2.39%" className="flex-1 bg-[#cab3c3] pt-[4px] pl-[1px] text-[16px] !leading-[15.500px]" />
            </div>
          </div>
        </div>
      </div>
      <div className="flex w-[390px] flex-col">
        <Cell name="scale" value="17.28%" className="h-[23px] shrink-0 bg-[#bff3f0] pt-[1px] pl-[2px] text-[19px]" />
        <div className="flex flex-1 border-x border-[#35455f] px-[1px] pt-[2px]">
          <Cell name="deployments" value="17.28%" className="flex-1 bg-[#91c0c7] pt-[4px] pl-[2px] text-[19.600px] tracking-[-0.200px]" />
        </div>
      </div>
      <div className="flex w-[218px] flex-col">
        <Cell name="token" value="9.76%" className="h-[23px] shrink-0 bg-[#bfdbff] pt-[1px] pl-[2px] text-[19px]" />
        <div className="flex flex-1 border-x border-[#35455f] px-[1px] pt-[2px]">
          <Cell name="serviceaccounts" value="9.76%" className="flex-1 bg-[#98afcf] pt-[4px] pl-[2px] text-[19.600px] tracking-[-0.200px]" />
        </div>
      </div>
    </div>
  );
}

const slices: [number, number, string][] = [
  [0, 34.9, "#fdeac0"],
  [34.9, 64.9, "#fbbab5"],
  [64.9, 93.8, "#ffe4ed"],
  [93.8, 119, "#d3f5f3"],
  [119, 143, "#fbbab5"],
  [143, 167, "#ffd3e2"],
  [167, 182, "#ffe4ed"],
  [182, 201, "#fbbab5"],
  [201, 217, "#fddc9a"],
  [217, 230, "#fdeac0"],
  [230, 360, "#ffd3e2"],
];

function Pie() {
  const cx = 2566.3;
  const cy = 1354.5;
  const r = 260.5;
  const at = (deg: number) => {
    const t = (deg * Math.PI) / 180;
    return `${(cx + r * Math.sin(t)).toFixed(1)} ${(cy - r * Math.cos(t)).toFixed(1)}`;
  };
  return (
    <svg viewBox="1710 1083 1700 297" className="h-[297px] w-[1700px]">
      {slices.map(([a, b, c]) => (
        <path key={a} d={`M${cx} ${cy}L${at(a)}A${r} ${r} 0 ${b - a > 180 ? 1 : 0} 1 ${at(b)}z`} fill={c} stroke="#0a1526" strokeWidth="2" />
      ))}
      <g fontSize="20" fill="#07101f">
        <text x="2398" y="1241" textLength="62">events</text>
        <text x="2466" y="1241" textLength="39" fontWeight="700">486</text>
        <g transform="translate(2685 1241) rotate(-39.500)" textAnchor="middle">
          <text x="0" y="6" textLength="158">serviceaccounts</text>
          <text x="3" y="26" fontWeight="700">112</text>
        </g>
        <text transform="translate(2663 1382) rotate(12)">Configmaps</text>
      </g>
      <path d="M2823 1305.500L2835 1303h13" fill="none" stroke="#8e9fbc" strokeWidth="1.300" />
      <g fontSize="15" fontWeight="500" fill="#cad3e2">
        <text x="2860" y="1307.500" textLength="288">clusterrolebindings.rbac.authorization.k8s.io</text>
        <text x="3155" y="1307.500" textLength="24">108</text>
      </g>
    </svg>
  );
}

function HoverActions() {
  const p = { fill: "none", stroke: "#cad3e2", strokeWidth: 1.3 };
  return (
    <div className="absolute top-[-40px] left-[1536px] flex h-[41px] w-[160px] items-center gap-[10px] rounded-t-[6px] border border-b-0 border-[#43536f] bg-[#0b1628] pl-[10px]">
      <DocClockIcon className="h-[19px] w-[19px] text-[#cad3e2]" />
      <svg viewBox="0 0 20 20" className="h-5 w-5" {...p}>
        <circle cx="10" cy="10" r="9.200" />
        <path d="M14 5.500L11.500 11.500 6 14.500 8.500 8.500zM10 .8v2M10 17.200v2" />
      </svg>
      <svg viewBox="0 0 20 20" className="h-5 w-5" {...p}>
        <path d="M8 17.500H2V2h15v8M2 5h15M5 9h3M5 12h2" />
        <circle cx="13" cy="13" r="4" />
        <path d="M16 16l3 3" />
      </svg>
      <svg viewBox="0 0 20 20" className="h-5 w-5" {...p}>
        <path d="M12 8l6.500-6.500M12.500 1.500h6v6M8 12l-6.500 6.500M1.500 12.500v6h6" />
      </svg>
      <MenuDots className="ml-[5px] h-[20px] w-[6px]" />
    </div>
  );
}

function Dashboard() {
  return (
    <div className="flex flex-1 flex-col overflow-hidden">
      <div className="h-[125px] shrink-0 pl-[10px]">
        <div className="flex h-[50px] items-center">
          <PanelTitle w={388}>Kubernetes Dashboards [Metrics Kubernetes]</PanelTitle>
        </div>
        <div className="flex h-[44px] items-center pl-[10px] text-[17.500px] text-[#cad3e2]">
          {links.map(([l, w], k) => (
            <div key={l} className="flex shrink-0">
              <Fit w={w} className="underline decoration-1 underline-offset-2">{l}</Fit>
              {k < links.length - 1 && <span className="w-[9.200px]">,</span>}
            </div>
          ))}
        </div>
      </div>
      <div className="flex h-[534px] shrink-0">
        <div className="w-[1709px] overflow-hidden">
          <div className="flex h-[50px] items-center pl-[10px]">
            <PanelTitle w={509}>Apiserver Requests Rate per Resource [Metrics Kubernetes]</PanelTitle>
          </div>
          <div className="flex">
            <RateChart />
            <Legend items={legendA} pad="pl-[5px]" />
          </div>
        </div>
        <div className="w-[1711px] overflow-hidden">
          <div className="flex h-[50px] items-center pl-[12px]">
            <PanelTitle w={501}>Apiserver Watch Events Size per Kind [Metrics Kubernetes]</PanelTitle>
          </div>
          <div className="flex">
            <SizeChart />
            <Legend items={legendB} pad="pl-[5px]" />
          </div>
        </div>
      </div>
      <div className="flex flex-1">
        <div className="w-[1709px]">
          <div className="flex h-[33px] items-center pl-[10px]">
            <PanelTitle w={619}>Apiserver Requests per Resource and SubResource [Metrics Kubernetes]</PanelTitle>
          </div>
          <Treemap />
        </div>
        <div className="relative w-[1711px] border-t border-l border-[#43536f]">
          <div className="flex h-[31px] items-center pl-[11px]">
            <PanelTitle w={513}>Apiserver Stored Objects per Resource [Metrics Kubernetes]</PanelTitle>
          </div>
          <Pie />
          <HoverActions />
        </div>
      </div>
    </div>
  );
}

/* ---------- taskbar ---------- */

function ChromeLogo({ badge, tone = "#00569c" }: { badge?: string; tone?: string }) {
  return (
    <svg viewBox="0 0 30 30" className="h-[30px] w-[30px] shrink-0">
      <path d="M15 15L2 7.500A15 15 0 0 1 28 7.500z" fill="#ea4335" />
      <path d="M15 15L28 7.500A15 15 0 0 1 15 30z" fill="#fbbc04" />
      <path d="M15 15V30A15 15 0 0 1 2 7.500z" fill="#34a853" />
      <path d="M15 8h13.300A15 15 0 0 1 15 30l6-11.500z" fill="#fbc116" />
      <path d="M2 7.500L9 18.500l6 3.500-4 7.500A15 15 0 0 1 2 7.500z" fill="#2a9c49" />
      <path d="M2 7.500A15 15 0 0 1 28.300 8H15l-6 5z" fill="#e33b2e" />
      <circle cx="15" cy="15" r="7.200" fill="#fff" />
      <circle cx="15" cy="15" r="5.700" fill="#3b7ded" />
      {badge && (
        <>
          <circle cx="22.500" cy="7.500" r="7.500" fill={tone} />
          <text x="22.500" y="11" fontSize="9.500" textAnchor="middle" fill="#e8eef4">{badge}</text>
        </>
      )}
    </svg>
  );
}

const apps: { el: ReactNode; run?: boolean }[] = [
  {
    el: (
      <svg viewBox="0 0 30 30" className="h-[30px] w-[30px]">
        <linearGradient id="win" x1="0" y1="0" x2="1" y2="1">
          <stop offset="0" stopColor="#8fe3ff" />
          <stop offset="1" stopColor="#0b93f5" />
        </linearGradient>
        <path d="M1 1h13.500v13.500H1zM15.500 1H29v13.500H15.500zM1 15.500h13.500V29H1zM15.500 15.500H29V29H15.500z" fill="url(#win)" />
      </svg>
    ),
  },
  {
    el: (
      <svg viewBox="0 0 30 30" className="h-[30px] w-[30px]">
        <path d="M11.500 1h7l1 4.500 3.500 2 4.200-1.500 2.800 6.200L27 15l3 3.500-3 6-4.200-1.200-3.300 2-1 4.200h-7l-1-4.200-3.300-2L3 24.500l-3-6L3 15 0 12.200l3-6.200L7 7.500l3.500-2z" fill="#7f8a94" />
        <circle cx="15" cy="15" r="6.800" fill="#e6eaee" />
        <circle cx="15" cy="15" r="5.300" fill="#0b5ca8" />
      </svg>
    ),
  },
  { el: null },
  { el: <ChromeLogo badge="S" /> },
  { el: <ChromeLogo badge="E" tone="#6f8791" /> },
  {
    el: (
      <svg viewBox="0 0 30 30" className="h-[30px] w-[30px]">
        <rect y="4" width="30" height="23" rx="1" fill="#0d62b0" />
        <path d="M0 15c4 0 5-7 8-6s3 5 6 5 5-7 8-6 4 7 8 7v12H0z" fill="#2aa3e8" />
        <path d="M0 19c3 0 4 2 6 0s3-8 5-5 4 9 6 5 3-4 5-2 4 4 8 2v8H0z" fill="#a8e3fb" />
      </svg>
    ),
  },
  {
    el: (
      <svg viewBox="0 0 30 30" className="h-[30px] w-[30px]">
        <path d="M0 4a2 2 0 0 1 2-2h9l3 3v4H0z" fill="#e0a010" />
        <rect y="5" width="30" height="23.500" rx="1.500" fill="#ffca3a" />
        <path d="M5.500 28.500V24a2.500 2.500 0 0 1 2.500-2.500h14a2.500 2.500 0 0 1 2.500 2.500v4.500z" fill="#1375c8" />
        <path d="M9.500 25.500h11" stroke="#0a4f93" strokeWidth="1.500" />
      </svg>
    ),
  },
  {
    el: (
      <svg viewBox="0 0 30 30" className="h-[30px] w-[30px]">
        <rect width="30" height="30" rx="3.500" fill="#2a8df7" />
        <path d="M5 6h7a4 4 0 0 1 0 8.500H7M12 15l5 9M5 24h4.500v-4" fill="none" stroke="#fff" strokeWidth="3" />
        <path d="M21 5.500l2 4 2-4M21 17v-3.500h3.500V17M25 21h-3.500v3.500H25" fill="none" stroke="#fff" strokeWidth="1.200" />
      </svg>
    ),
  },
  {
    el: (
      <span className="flex h-[30px] w-[30px] items-center justify-center bg-[#1a1a1a]">
        <SiNvidia className="h-[22px] w-[22px] text-[#76b900]" />
      </span>
    ),
  },
  {
    el: (
      <svg viewBox="0 0 30 30" className="h-[30px] w-[30px]">
        <rect width="30" height="30" fill="#a80505" />
        <path d="M17 4L9 16.500h5L12.500 26 21 13.500h-5z" fill="#fff" />
      </svg>
    ),
  },
  {
    el: (
      <svg viewBox="0 0 30 30" className="h-[30px] w-[30px]">
        <path d="M15 2l12.500 7v12.500L15 29 2.500 21.500V9z" fill="#7e858d" />
        <path d="M15 2L2.500 21.500V9z" fill="#b7bec6" />
        <path d="M15 29l12.500-7.500V9z" fill="#555b62" />
        <path d="M16 8l6 12-14 2z" fill="#1f2124" />
      </svg>
    ),
  },
  {
    el: (
      <svg viewBox="0 0 30 30" className="h-[30px] w-[30px]" fill="none">
        <path d="M15 1l12 7v14l-12 7-12-7V8z" fill="#101012" stroke="#8b8d90" strokeWidth="1.300" />
        <g strokeWidth="2.600">
          <path d="M15 4.500L23 9" stroke="#f2d021" />
          <path d="M24.500 9.500v9" stroke="#3fc35a" />
          <path d="M24 20.500l-8.500 5" stroke="#24a4ef" />
          <path d="M14 25.500l-7-4" stroke="#5a5cf0" />
          <path d="M5.500 20.500v-9" stroke="#d13ad0" />
          <path d="M6 9.500L14 4.500" stroke="#ee5a2a" />
        </g>
        <path d="M11 11a6 6 0 1 0 8 0M15 8.500V16" stroke="#fff" strokeWidth="2.400" />
      </svg>
    ),
  },
  {
    el: (
      <span className="flex h-[30px] w-[30px] items-center justify-center rounded-full border border-[#d9aeb4] bg-[#cf0a3c] text-[12px] font-black tracking-[-0.500px] text-white italic">GT3</span>
    ),
  },
  {
    el: (
      <svg viewBox="0 0 30 30" className="h-[30px] w-[30px]">
        <circle cx="15" cy="15" r="15" fill="#2f3df5" />
        <circle cx="15" cy="14.500" r="7.600" fill="#fff" />
        <path d="M6.500 24.500l1.500-6 4.500 4z" fill="#fff" />
        <circle cx="15" cy="14.500" r="9.300" fill="none" stroke="#fff" strokeWidth="1.200" strokeDasharray="3 1.500" />
      </svg>
    ),
  },
  {
    el: (
      <span className="flex h-[30px] w-[30px] items-center justify-center rounded-full bg-[#5865f2]">
        <FaDiscord className="h-[19px] w-[19px] text-white" />
      </span>
    ),
  },
  {
    el: (
      <svg viewBox="0 0 30 30" className="h-[30px] w-[30px]">
        <linearGradient id="steam" x1="0" y1="0" x2="0" y2="1">
          <stop offset="0" stopColor="#101a38" />
          <stop offset="1" stopColor="#137fbd" />
        </linearGradient>
        <circle cx="15" cy="15" r="14" fill="url(#steam)" />
        <path d="M1.500 16l8 3.300M10 20l9-8" stroke="#fff" strokeWidth="5" strokeLinecap="round" />
        <circle cx="19.500" cy="11.500" r="5.200" fill="#fff" />
        <circle cx="19.500" cy="11.500" r="3.600" fill="#15335c" />
        <circle cx="19.500" cy="11.500" r="2.400" fill="#fff" />
        <circle cx="10.500" cy="20.500" r="3.600" fill="#fff" />
        <circle cx="10.500" cy="20.500" r="2.100" fill="none" stroke="#15467a" strokeWidth="1" />
      </svg>
    ),
  },
  {
    run: true,
    el: (
      <svg viewBox="0 0 30 30" className="h-[30px] w-[30px]">
        <path d="M9 0h19l2 2v15L18 30H0V9z" fill="#14c8ee" />
        <path d="M9 0h21v15l-6 8V5H5z" fill="#7fe08a" />
        <path d="M20 0h8l2 2v12l-6 6V4h-7z" fill="#f0ee3c" />
        <rect x="6" y="5" width="18.500" height="19.500" fill="#000" />
        <text x="7.500" y="15" fontSize="9.500" fontWeight="700" fill="#fff">PC</text>
        <path d="M8 21h8" stroke="#fff" strokeWidth="1.500" />
      </svg>
    ),
  },
  {
    run: true,
    el: (
      <svg viewBox="0 0 30 30" className="h-[30px] w-[30px]">
        <rect y="4" width="30" height="22" rx="1.500" fill="#3f4042" />
        <path d="M1.500 4h9v4H0V5.500A1.500 1.500 0 0 1 1.500 4z" fill="#c9cacc" />
        <path d="M10.500 4h10v4h-10z" fill="#8b8c8e" />
        <path d="M20.500 4h8A1.500 1.500 0 0 1 30 5.500V8h-9.500z" fill="#6b6c6e" />
        <path d="M4.500 11.500l6.500 5.500-6.500 5.500M13.500 21.500H23" fill="none" stroke="#eee" strokeWidth="2.600" />
      </svg>
    ),
  },
  {
    run: true,
    el: (
      <svg viewBox="0 0 30 30" className="h-[30px] w-[30px]">
        <rect x="15" y="1" width="12" height="10" fill="#d4d4cc" />
        <rect x="17" y="3" width="8" height="6.500" fill="#1010e0" />
        <path d="M13 12h15l-2 2.500H12z" fill="#c8c8c0" />
        <rect x="3" y="16" width="12" height="9" fill="#d4d4cc" />
        <rect x="5" y="17.500" width="8" height="6" fill="#1010e0" />
        <path d="M1 26h16l-2 3H0z" fill="#e4e4dc" />
        <path d="M21 5l-5 8 4 0-10 8 5-8h-4z" fill="#ffee00" stroke="#4a4400" strokeWidth=".5" />
      </svg>
    ),
  },
  {
    el: (
      <svg viewBox="0 0 30 30" className="h-[30px] w-[30px]" fill="none" strokeWidth="3">
        <path d="M0 3.500h4.500l3.500 21 2.500 2.500h3.500v-6l-4-3V2M29 15.500H19.500v5H28v5.500l-1.500 1.500h-8" stroke="#0f7884" />
        <path d="M18 10.500l2-7h4l4 3.500v4h-8" stroke="#ee8512" />
      </svg>
    ),
  },
  {
    el: (
      <svg viewBox="0 0 30 30" className="h-[30px] w-[30px]">
        <circle cx="25" cy="7" r="3.200" fill="#5059c9" />
        <circle cx="16.500" cy="6" r="4.300" fill="#7b83eb" />
        <path d="M20 12h9.500v8a5 5 0 0 1-8 4z" fill="#5059c9" />
        <path d="M9 12h15v9a7.500 7.500 0 0 1-15 0z" fill="#7b83eb" />
        <rect y="7" width="15" height="15" rx="1.500" fill="#4b53bc" />
        <text x="7.500" y="19" fontSize="12" fontWeight="700" textAnchor="middle" fill="#fff">T</text>
      </svg>
    ),
  },
];

function Taskbar() {
  return (
    <div className="flex h-[60px] shrink-0 items-stretch border-t border-[#494949] bg-[#222222] text-white">
      <div className="ml-[1142px] flex">
        {apps.map((a, k) =>
          k === 2 ? (
            <div key={k} className="mt-[4px] flex h-[50px] w-[55px] justify-center">
              <div className="relative flex h-[50px] w-[50px] flex-col items-center rounded-[6px] border border-[#3b3b3b] bg-[#2e2e2e] pt-[9px]">
                <ChromeLogo />
                <div className="mt-[5px] h-[4px] w-5 shrink-0 rounded-full bg-[#98a5ab]" />
                <AvatarPhoto className="absolute top-[3px] left-[24px] h-[20px] w-[20px]" />
              </div>
            </div>
          ) : (
            <div key={k} className="flex w-[55px] flex-col items-center pt-[14px]">
              {a.el}
              {a.run && <div className="mt-[5px] h-[4px] w-2 rounded-full bg-[#9a9a9a]" />}
            </div>
          ),
        )}
      </div>
      <div className="ml-auto flex items-center pr-[24px]">
        <svg viewBox="0 0 14 8" className="h-[8px] w-[14px]" fill="none" stroke="#fff" strokeWidth="1.700">
          <path d="M1 7l6-6 6 6" />
        </svg>
        <svg viewBox="0 0 20 14" className="ml-[23px] h-[13px] w-5">
          <path d="M5 13.500a4.500 4.500 0 0 1-1-8.800A6 6 0 0 1 15.500 4.500 4.500 4.500 0 0 1 16 13.500z" fill="#f4f4f4" />
          <path d="M4 4.700A6 6 0 0 1 15.500 4.500L8 8z" fill="#a8a8a8" />
        </svg>
        <div className="ml-[24px] flex w-[30px] flex-col items-center text-[15px] leading-5">
          <Fit w={29}>ENG</Fit>
          <Fit w={19}>US</Fit>
        </div>
        <svg viewBox="0 0 20 16" className="ml-[22px] h-4 w-5" fill="none" stroke="#fff" strokeWidth="1.500">
          <path d="M1 6a12.500 12.500 0 0 1 18 0M3.800 9a8.800 8.800 0 0 1 12.400 0M6.700 12a4.700 4.700 0 0 1 6.600 0" />
          <circle cx="10" cy="14" r="1" fill="#fff" />
        </svg>
        <svg viewBox="0 0 20 16" className="ml-[10px] h-4 w-5" fill="none" stroke="#fff" strokeWidth="1.300">
          <path d="M1 5.500h3L8.500 1.500v13L4 10.500H1zM11.500 5.500a4 4 0 0 1 0 5M14 3.500a7 7 0 0 1 0 9M16.500 1.500a10 10 0 0 1 0 13" />
        </svg>
        <div className="ml-[20px] flex w-[77px] flex-col items-end text-[15px] leading-5">
          <Fit w={55}>8:58 AM</Fit>
          <Fit w={77}>2025-08-23</Fit>
        </div>
      </div>
    </div>
  );
}

export default function App() {
  return (
    <div className="flex h-[1440px] w-[3440px] flex-col overflow-hidden bg-[#0b1628] font-['Open_Sans','Noto_Sans',sans-serif]">
      <TabStrip />
      <Toolbar />
      <BookmarkBar />
      <div className="flex h-[1229px] shrink-0 font-['Inter',sans-serif]">
        <div className="flex w-[3420px] flex-col overflow-hidden">
          <KibanaHeader />
          <Breadcrumbs />
          <QueryBar />
          <Dashboard />
        </div>
        <div className="flex w-5 flex-col items-center pt-[7px] pl-[1px]">
          <svg viewBox="0 0 12 9" className="h-[9px] w-3">
            <path d="M0 9L6 0l6 9z" fill="#4b5d7e" />
          </svg>
          <div className="mt-[7px] h-[985px] w-[11px] rounded-full bg-[#3d4b68]" />
          <svg viewBox="0 0 12 9" className="mt-auto mb-[5px] h-[9px] w-3">
            <path d="M0 0l6 9 6-9z" fill="#3d4b68" />
          </svg>
        </div>
      </div>
      <Taskbar />
    </div>
  );
}
